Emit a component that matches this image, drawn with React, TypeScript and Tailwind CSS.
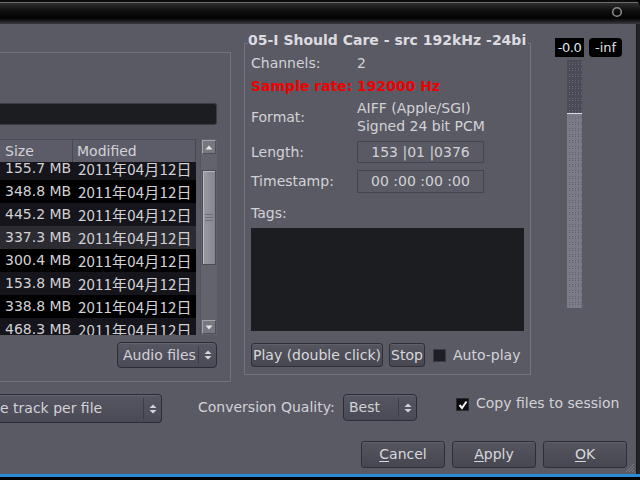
import React from "react";

const UpDown = () => (
  <svg width="8" height="12" viewBox="0 0 8 12">
    <path d="M4 1.5 L7.5 5 H0.5Z M4 10.5 L7.5 7 H0.5Z" fill="#d4d4d8" />
  </svg>
);

function Combo({
  label,
  className,
  textClass,
}: {
  label: string;
  className: string;
  textClass?: string;
}) {
  return (
    <div
      className={
        "flex items-center border border-[#2c2c34] bg-[linear-gradient(to_bottom,#565662,#4a4a56)] shadow-[inset_0_1px_0_#62626e] " +
        className
      }
    >
      <span className={"flex-1 whitespace-nowrap overflow-hidden " + (textClass ?? "pl-[5px]")}>{label}</span>
      <div className="w-px self-stretch my-[3px] bg-[#3c3c46]" />
      <div className="w-[17px] flex items-center justify-center">
        <UpDown />
      </div>
    </div>
  );
}

function Btn({ first, rest, className }: { first: string; rest: string; className: string }) {
  return (
    <div
      className={
        "flex items-center justify-center rounded-[3px] border border-[#2e2e36] bg-[linear-gradient(to_bottom,#55555f,#474752)] shadow-[inset_0_1px_0_#60606a] text-[#d8d8dc] whitespace-nowrap " +
        className
      }
    >
      <span>
        {first && <span className="underline underline-offset-2">{first}</span>}
        {rest}
      </span>
    </div>
  );
}

const rows = [
  { size: "155.7 MB", bg: "bg-[#15151b]" },
  { size: "348.8 MB", bg: "bg-[#000000]" },
  { size: "445.2 MB", bg: "bg-[#15151b]" },
  { size: "337.3 MB", bg: "bg-[#2b2b31]" },
  { size: "300.4 MB", bg: "bg-[#000000]" },
  { size: "153.8 MB", bg: "bg-[#15151b]" },
  { size: "338.8 MB", bg: "bg-[#000000]" },
  { size: "468.3 MB", bg: "bg-[#15151b]" },
];

function Meter() {
  return (
    <svg width="15" height="248" viewBox="0 0 15 248">
      <defs>
        <pattern id="dt" width="3" height="6" patternUnits="userSpaceOnUse" x="1" y="0">
          <rect x="1" y="2" width="1" height="1" fill="#66667a" />
          <rect x="1" y="4" width="1" height="1" fill="#66667a" />
        </pattern>
        <pattern id="db" width="3" height="6" patternUnits="userSpaceOnUse" x="1" y="0">
          <rect x="1" y="2" width="1" height="1" fill="#62626f" />
          <rect x="1" y="4" width="1" height="1" fill="#62626f" />
        </pattern>
      </defs>
      <rect x="0" y="0" width="15" height="53" fill="#4b4b57" />
      <rect x="0" y="0" width="15" height="53" fill="url(#dt)" />
      <rect x="0" y="54" width="15" height="194" fill="#7a7a88" />
      <rect x="0" y="54" width="15" height="194" fill="url(#db)" />
      <rect x="0" y="53" width="15" height="1" fill="#d8d8e0" />
    </svg>
  );
}

export default function App() {
  return (
    <div className="w-[640px] h-[480px] bg-black overflow-hidden flex flex-col font-['DejaVu_Sans',sans-serif] text-[14px] leading-[17px] text-[#d2d2d6]">
      {/* title bar */}
      <div className="h-[24px] shrink-0 flex items-center justify-end pr-[17px] rounded-tr-[7px] bg-[linear-gradient(to_bottom,#0c0c0c_0px,#0c0c0c_2px,#6e6e6e_2px,#6e6e6e_3px,#2e2e2e_3px,#0e0e0e_11px,#030303_18px,#1c1c20_21px,#3a3a42_24px)]">
        <svg width="12" height="12" viewBox="0 0 12 12">
          <circle cx="6" cy="6" r="4.3" fill="none" stroke="#8a8a8a" strokeWidth="1.6" />
        </svg>
      </div>

      {/* body */}
      <div className="flex h-[450px] shrink-0">
        <div className="relative w-[636px] bg-[#5a5a65] flex flex-col">
          {/* top section */}
          <div className="flex h-[358px] items-start shrink-0">
            {/* left panel */}
            <div className="mt-[28px] w-[231px] h-[330px] border-t border-r border-b border-[#72727c] flex flex-col pr-[13px]">
              <div className="mt-[50px] h-[22px] bg-[#1c1d21] border border-l-0 border-[#3c3c46] rounded-r-[3px]" />
              <div className="mt-[14px] h-[196px] flex">
                <div className="w-[196px] flex flex-col">
                  <div className="h-[23px] flex bg-[#5c5c68] border-t border-[#4a4a54]">
                    <div className="w-[73px] pl-[5px] flex items-center border-r border-[#48484f]">Size</div>
                    <div className="flex-1 pl-[4px] flex items-center border-r border-[#48484f]">Modified</div>
                  </div>
                  <div className="h-[173px] overflow-hidden bg-black">
                    <div className="-mt-[5px]">
                      {rows.map((r, i) => (
                        <div key={i} className={"h-[23px] flex items-center " + r.bg}>
                          <div className="w-[73px] pl-[5px] whitespace-nowrap">{r.size}</div>
                          <div className="pl-[5px] whitespace-nowrap font-['Noto_Sans_CJK_JP',sans-serif] text-[15px] leading-[17px] tracking-[0.2px]">
                            2011年04月12日
                          </div>
                        </div>
                      ))}
                    </div>
                  </div>
                </div>
                <div className="ml-[4px] w-[17px] h-[196px] bg-[#63636d] border-l border-[#55555e] flex flex-col items-center">
                  <div className="mt-[1px] w-[14px] h-[14px] bg-[#77777f] border border-t-[#a4a4ac] border-l-[#a4a4ac] border-b-[#4e4e56] border-r-[#4e4e56] flex items-center justify-center">
                    <svg width="8" height="5" viewBox="0 0 8 5"><path d="M4 0.5 L7.5 4.5 H0.5Z" fill="#e6e6ea" /></svg>
                  </div>
                  <div className="mt-[16px] w-[14px] h-[95px] bg-[linear-gradient(to_right,#9a9aa2,#86868e)] border border-[#4c4c54] shadow-[inset_1px_1px_0_#b8b8c0] flex flex-col items-center justify-center gap-[2px]">
                    <div className="w-[8px] h-px bg-[#6c6c74]" />
                    <div className="w-[8px] h-px bg-[#6c6c74]" />
                    <div className="w-[8px] h-px bg-[#6c6c74]" />
                  </div>
                  <div className="mt-[55px] w-[14px] h-[14px] bg-[#77777f] border border-t-[#a4a4ac] border-l-[#a4a4ac] border-b-[#4e4e56] border-r-[#4e4e56] flex items-center justify-center">
                    <svg width="8" height="5" viewBox="0 0 8 5"><path d="M4 4.5 L7.5 0.5 H0.5Z" fill="#e6e6ea" /></svg>
                  </div>
                </div>
              </div>
              <Combo label="Audio files" className="mt-[7px] h-[26px] w-[100px] self-end rounded-[4px]" />
            </div>

            {/* right group */}
            <div className="ml-[13px] mt-[19px] w-[287px] h-[332px] border border-[#74747e] px-[6px] flex flex-col">
              <div className="-mt-[12px] -ml-[3px] w-[280px] h-[16px] leading-[16px] bg-[#5a5a65] font-bold text-[#dcdce0] whitespace-nowrap overflow-hidden">
                05-I Should Care - src 192kHz -24bi
              </div>
              <div className="mt-[6px] h-[18px] leading-[18px] flex">
                <div className="w-[106px]">Channels:</div>
                <div>2</div>
              </div>
              <div className="mt-[5px] h-[18px] leading-[18px] flex font-bold text-[#f00000]">
                <div className="w-[106px]">Sample rate:</div>
                <div>192000 Hz</div>
              </div>
              <div className="mt-[4px] h-[36px] leading-[18px] flex items-center">
                <div className="w-[106px]">Format:</div>
                <div>
                  <div>AIFF (Apple/SGI)</div>
                  <div>Signed 24 bit PCM</div>
                </div>
              </div>
              <div className="mt-[6px] h-[22px] flex items-center">
                <div className="w-[106px]">Length:</div>
                <div className="w-[127px] h-[22px] border border-[#44444e] flex items-center justify-center whitespace-nowrap">
                  153 |01 |0376
                </div>
              </div>
              <div className="mt-[7px] h-[23px] flex items-center">
                <div className="w-[106px]">Timestamp:</div>
                <div className="w-[127px] h-[23px] border border-[#44444e] flex items-center justify-center whitespace-nowrap">
                  00 :00 :00 :00
                </div>
              </div>
              <div className="mt-[11px] h-[18px] leading-[18px]">Tags:</div>
              <div className="mt-[6px] h-[103px] bg-[#1c1d21]" />
              <div className="mt-[12px] h-[24px] flex items-center">
                <Btn first="" rest="Play (double click)" className="w-[132px] h-[24px]" />
                <Btn first="" rest="Stop" className="ml-[6px] w-[36px] h-[24px]" />
                <div className="ml-[8px] w-[13px] h-[13px] bg-[#1e1f24] border border-[#3a3a44]" />
                <div className="ml-[7px] whitespace-nowrap">Auto-play</div>
              </div>
            </div>

            {/* meter */}
            <div className="ml-[24px] mt-[14px] flex flex-col">
              <div className="flex gap-[5px] text-[13px] leading-[19px]">
                <div className="w-[29px] h-[19px] bg-black text-[#dfe6ee] flex items-center justify-center tracking-[-0.5px]">-0.0</div>
                <div className="w-[33px] h-[19px] bg-black rounded-[4px] text-[#e0e0e4] flex items-center justify-center">-inf</div>
              </div>
              <div className="mt-[3px] ml-[12px]">
                <Meter />
              </div>
            </div>
          </div>

          {/* options row */}
          <div className="mt-[12px] h-[29px] flex items-start shrink-0">
            <Combo label="e track per file" className="w-[162px] h-[29px] border-l-0 rounded-r-[4px]" textClass="pl-0" />
            <div className="ml-[36px] w-[145px] mt-[5px] whitespace-nowrap">Conversion Quality:</div>
            <Combo label="Best" className="w-[74px] h-[27px] rounded-[4px]" />
            <div className="ml-[39px] mt-[4px] w-[13px] h-[13px] bg-[#0c0c0e] border border-[#2a2a30] flex items-center justify-center">
              <svg width="10" height="10" viewBox="0 0 10 10">
                <path d="M1.5 5 L4 8 L8.5 1.5" fill="none" stroke="#f0f0f0" strokeWidth="2" />
              </svg>
            </div>
            <div className="ml-[7px] mt-[1px] whitespace-nowrap">Copy files to session</div>
          </div>

          {/* buttons row */}
          <div className="mt-[18px] h-[27px] flex justify-end gap-[7px] pr-[9px] shrink-0">
            <Btn first="C" rest="ancel" className="w-[84px] h-[27px]" />
            <Btn first="A" rest="pply" className="w-[84px] h-[27px]" />
            <Btn first="O" rest="K" className="w-[84px] h-[27px]" />
          </div>

          <svg className="absolute right-[1px] bottom-[1px]" width="12" height="12" viewBox="0 0 12 12">
            <path d="M11 3 L3 11 M11 6 L6 11 M11 9 L9 11" stroke="#7a7a84" strokeWidth="1" />
          </svg>
        </div>
        <div className="w-[4px] bg-[#222228] border-l border-[#16161a]" />
      </div>
      <div className="h-[3px] shrink-0 bg-[#2b8ad6]" />
      <div className="flex-1 bg-black" />
    </div>
  );
}
